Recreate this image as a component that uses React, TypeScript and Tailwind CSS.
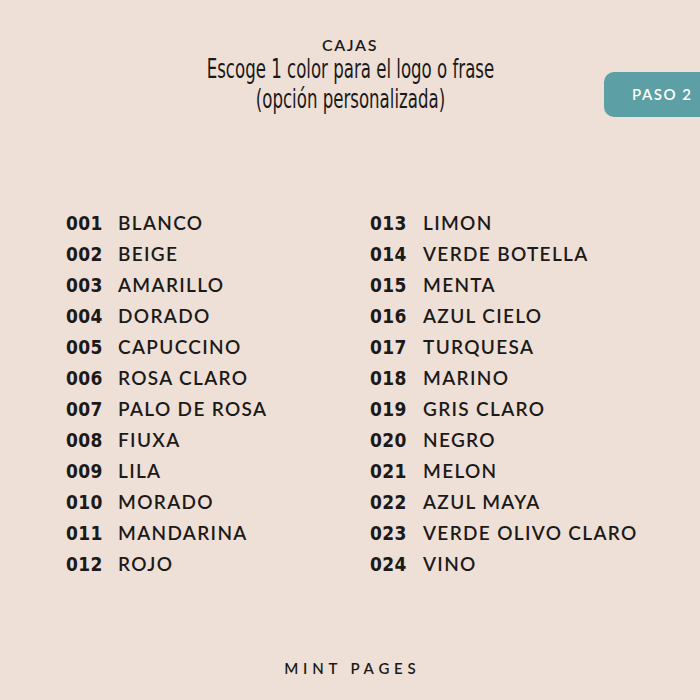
import React from "react";

const left = [
  ["001", "BLANCO"],
  ["002", "BEIGE"],
  ["003", "AMARILLO"],
  ["004", "DORADO"],
  ["005", "CAPUCCINO"],
  ["006", "ROSA CLARO"],
  ["007", "PALO DE ROSA"],
  ["008", "FIUXA"],
  ["009", "LILA"],
  ["010", "MORADO"],
  ["011", "MANDARINA"],
  ["012", "ROJO"],
];

const right = [
  ["013", "LIMON"],
  ["014", "VERDE BOTELLA"],
  ["015", "MENTA"],
  ["016", "AZUL CIELO"],
  ["017", "TURQUESA"],
  ["018", "MARINO"],
  ["019", "GRIS CLARO"],
  ["020", "NEGRO"],
  ["021", "MELON"],
  ["022", "AZUL MAYA"],
  ["023", "VERDE OLIVO CLARO"],
  ["024", "VINO"],
];

const ColorList = ({ items, gap }: { items: string[][]; gap: string }) => (
  <div className="flex flex-col">
    {items.map(([num, name]) => (
      <div key={num} className="flex items-center h-[31px]">
        <span className={`font-['DejaVu_Sans_Condensed','DejaVu_Sans',sans-serif] [font-stretch:condensed] font-bold text-[19px] tracking-[0.02em] text-[#1c1a19] ${gap}`}>
          {num}
        </span>
        <span className="font-['Lato',sans-serif] font-semibold text-[19px] tracking-[0.07em] text-[#1c1a19]">
          {name}
        </span>
      </div>
    ))}
  </div>
);

export default function App() {
  return (
    <div className="w-[700px] h-[700px] bg-[#eee0d6] flex flex-col overflow-hidden">
      {/* header */}
      <div className="flex flex-col items-center pt-[35px]">
        <div className="font-['Lato',sans-serif] font-semibold text-[16px] tracking-[0.1em] text-[#1c1a19] leading-[20px]">
          CAJAS
        </div>
        <div className="font-['DejaVu_Sans_Condensed','DejaVu_Sans',sans-serif] [font-stretch:condensed] text-[26px] text-[#1c1a19] leading-[30px] text-center scale-x-[0.71] -mt-[1px]">
          <div>Escoge 1 color para el logo o frase</div>
          <div>(opción personalizada)</div>
        </div>
      </div>

      {/* step badge */}
      <div className="flex justify-end -mt-[42px]">
        <div className="w-[96px] h-[45px] bg-[#5c9fa5] rounded-l-[10px] flex items-center pl-[28px]">
          <span className="font-['Lato',sans-serif] font-semibold text-[15px] tracking-[0.1em] text-white">
            PASO 2
          </span>
        </div>
      </div>

      {/* colours */}
      <div className="flex pt-[91px] pl-[66px]">
        <div className="w-[304px]">
          <ColorList items={left} gap="w-[52px]" />
        </div>
        <ColorList items={right} gap="w-[53px]" />
      </div>

      {/* footer */}
      <div className="mt-auto pb-[21px] flex justify-center">
        <span className="font-['Lato',sans-serif] font-semibold text-[15px] tracking-[0.32em] text-[#1c1a19] pl-[0.32em]">
          MINT PAGES
        </span>
      </div>
    </div>
  );
}
